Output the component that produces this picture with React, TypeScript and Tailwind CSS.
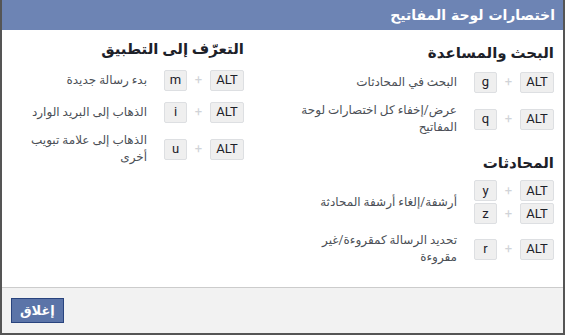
import React from "react";

type Shortcut = { keys: string[]; label: string };
type Section = { title: string; items: Shortcut[] };

const rightColumn: Section[] = [
  {
    title: "البحث والمساعدة",
    items: [
      { keys: ["g"], label: "البحث في المحادثات" },
      { keys: ["q"], label: "عرض/إخفاء كل اختصارات لوحة المفاتيح" },
    ],
  },
  {
    title: "المحادثات",
    items: [
      { keys: ["y", "z"], label: "أرشفة/إلغاء أرشفة المحادثة" },
      { keys: ["r"], label: "تحديد الرسالة كمقروءة/غير مقروءة" },
    ],
  },
];

const leftColumn: Section[] = [
  {
    title: "التعرّف إلى التطبيق",
    items: [
      { keys: ["m"], label: "بدء رسالة جديدة" },
      { keys: ["i"], label: "الذهاب إلى البريد الوارد" },
      { keys: ["u"], label: "الذهاب إلى علامة تبويب أخرى" },
    ],
  },
];

const Key = ({ children, wide }: { children: React.ReactNode; wide?: boolean }) => (
  <span
    className={
      "flex h-[21px] items-center justify-center rounded-[2px] border border-[#dddfe2] bg-[#efefef] text-[13px] text-[#1d2129] " +
      (wide ? "w-[34px]" : "w-[23px]")
    }
  >
    {children}
  </span>
);

const Combo = ({ letter }: { letter: string }) => (
  <div className="flex items-center">
    <Key wide>ALT</Key>
    <span className="w-[23px] text-center text-[13px] text-[#d0d3d8]">+</span>
    <Key>{letter}</Key>
  </div>
);

const Column = ({
  sections,
  descWidth,
  className,
  headingGap,
}: {
  sections: Section[];
  descWidth: string;
  className?: string;
  headingGap: string;
}) => (
  <div className={"flex flex-col " + (className ?? "")}>
    {sections.map((section, si) => (
      <div key={section.title} className={si > 0 ? "mt-[18px]" : ""}>
        <div className={"text-[15px] font-bold leading-[18px] text-[#1d2129] " + headingGap}>{section.title}</div>
        <div className="flex flex-col gap-[8px]">
          {section.items.map((item) => (
            <div key={item.label} className="flex min-h-[24px] items-center gap-[17px]">
              <div className="flex flex-col gap-[2px]">
                {item.keys.map((k) => (
                  <Combo key={k} letter={k} />
                ))}
              </div>
              <div className={"text-[12px] leading-[17px] text-[#4b4f56] " + descWidth}>{item.label}</div>
            </div>
          ))}
        </div>
      </div>
    ))}
  </div>
);

export default function App() {
  return (
    <div
      dir="rtl"
      className="flex h-[335px] w-[565px] flex-col border-x-2 border-b-2 border-[#555] bg-white"
      style={{ fontFamily: 'Roboto, "DejaVu Sans", sans-serif' }}
    >
      <div
        className="flex h-[30px] items-center bg-[#6d84b4] px-[8px] text-[14px] font-bold text-white"
        style={{ fontFamily: '"DejaVu Sans", sans-serif' }}
      >
        اختصارات لوحة المفاتيح
      </div>
      <div className="flex flex-1 pr-[9px] pt-[14px]">
        <Column sections={rightColumn} descWidth="w-[168px]" className="w-[310px]" headingGap="mb-[8px]" />
        <Column sections={leftColumn} descWidth="w-[132px]" className="-mt-[4px]" headingGap="mb-[10px]" />
      </div>
      <div className="flex h-[46px] items-center border-t border-[#ccc] bg-[#f2f2f2] pl-[9px]">
        <button
          className="mr-auto h-[25px] border border-[#29447e] bg-[#5b74a8] px-[8px] text-[13px] font-bold text-white"
          style={{ fontFamily: '"DejaVu Sans", sans-serif' }}
        >
          إغلاق
        </button>
      </div>
    </div>
  );
}
